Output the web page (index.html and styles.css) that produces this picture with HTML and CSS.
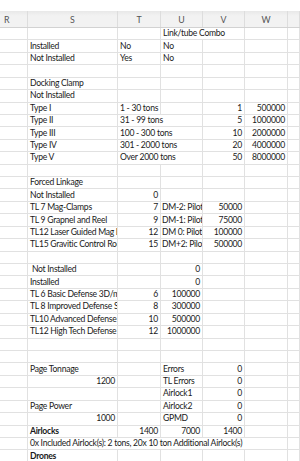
FILE: index.html
```html
<!DOCTYPE html>
<html>
<head>
<meta charset="utf-8">
<link rel="stylesheet" href="styles.css">
</head>
<body>
<div class="sheet">
  <div class="top"></div>
  <div class="hdr">
    <div class="hc first">R</div><div class="hc">S</div><div class="hc">T</div><div class="hc">U</div><div class="hc">V</div><div class="hc">W</div><div class="hc"></div>
  </div>

  <div class="row"><div class="c"></div><div class="c"></div><div class="c"></div><div class="c s2">Link/tube Combo</div><div class="c"></div><div class="c"></div></div>
  <div class="row"><div class="c"></div><div class="c">Installed</div><div class="c">No</div><div class="c">No</div><div class="c"></div><div class="c"></div><div class="c"></div></div>
  <div class="row"><div class="c"></div><div class="c">Not Installed</div><div class="c">Yes</div><div class="c">No</div><div class="c"></div><div class="c"></div><div class="c"></div></div>
  <div class="row"><div class="c"></div><div class="c"></div><div class="c"></div><div class="c"></div><div class="c"></div><div class="c"></div><div class="c"></div></div>
  <div class="row"><div class="c"></div><div class="c">Docking Clamp</div><div class="c"></div><div class="c"></div><div class="c"></div><div class="c"></div><div class="c"></div></div>
  <div class="row"><div class="c"></div><div class="c">Not Installed</div><div class="c"></div><div class="c"></div><div class="c"></div><div class="c"></div><div class="c"></div></div>
  <div class="row"><div class="c"></div><div class="c">Type I</div><div class="c">1 - 30 tons</div><div class="c"></div><div class="c n">1</div><div class="c n">500000</div><div class="c"></div></div>
  <div class="row"><div class="c"></div><div class="c">Type II</div><div class="c s2">31 - 99 tons</div><div class="c n">5</div><div class="c n">1000000</div><div class="c"></div></div>
  <div class="row"><div class="c"></div><div class="c">Type III</div><div class="c s2">100 - 300 tons</div><div class="c n">10</div><div class="c n">2000000</div><div class="c"></div></div>
  <div class="row"><div class="c"></div><div class="c">Type IV</div><div class="c s2">301 - 2000 tons</div><div class="c n">20</div><div class="c n">4000000</div><div class="c"></div></div>
  <div class="row"><div class="c"></div><div class="c">Type V</div><div class="c s2">Over 2000 tons</div><div class="c n">50</div><div class="c n">8000000</div><div class="c"></div></div>
  <div class="row"><div class="c"></div><div class="c"></div><div class="c"></div><div class="c"></div><div class="c"></div><div class="c"></div><div class="c"></div></div>
  <div class="row"><div class="c"></div><div class="c">Forced Linkage</div><div class="c"></div><div class="c"></div><div class="c"></div><div class="c"></div><div class="c"></div></div>
  <div class="row"><div class="c"></div><div class="c">Not Installed</div><div class="c n">0</div><div class="c"></div><div class="c"></div><div class="c"></div><div class="c"></div></div>
  <div class="row"><div class="c"></div><div class="c">TL 7 Mag-Clamps</div><div class="c n">7</div><div class="c u">DM-2: Pilot</div><div class="c n">50000</div><div class="c"></div><div class="c"></div></div>
  <div class="row"><div class="c"></div><div class="c">TL 9 Grapnel and Reel</div><div class="c n">9</div><div class="c u">DM-1: Pilot</div><div class="c n">75000</div><div class="c"></div><div class="c"></div></div>
  <div class="row"><div class="c"></div><div class="c">TL12 Laser Guided Mag Lock</div><div class="c n">12</div><div class="c u">DM 0: Pilot</div><div class="c n">100000</div><div class="c"></div><div class="c"></div></div>
  <div class="row"><div class="c"></div><div class="c">TL15 Gravitic Control Rod</div><div class="c n">15</div><div class="c u">DM+2: Pilot</div><div class="c n">500000</div><div class="c"></div><div class="c"></div></div>
  <div class="row"><div class="c"></div><div class="c"></div><div class="c"></div><div class="c"></div><div class="c"></div><div class="c"></div><div class="c"></div></div>
  <div class="row"><div class="c"></div><div class="c">&nbsp;Not Installed</div><div class="c"></div><div class="c n">0</div><div class="c"></div><div class="c"></div><div class="c"></div></div>
  <div class="row"><div class="c"></div><div class="c">Installed</div><div class="c"></div><div class="c n">0</div><div class="c"></div><div class="c"></div><div class="c"></div></div>
  <div class="row"><div class="c"></div><div class="c">TL 6 Basic Defense 3D/mm</div><div class="c n">6</div><div class="c n">100000</div><div class="c"></div><div class="c"></div><div class="c"></div></div>
  <div class="row"><div class="c"></div><div class="c">TL 8 Improved Defense Sys</div><div class="c n">8</div><div class="c n">300000</div><div class="c"></div><div class="c"></div><div class="c"></div></div>
  <div class="row"><div class="c"></div><div class="c">TL10 Advanced Defense</div><div class="c n">10</div><div class="c n">500000</div><div class="c"></div><div class="c"></div><div class="c"></div></div>
  <div class="row"><div class="c"></div><div class="c">TL12 High Tech Defense</div><div class="c n">12</div><div class="c n">1000000</div><div class="c"></div><div class="c"></div><div class="c"></div></div>
  <div class="row"><div class="c"></div><div class="c"></div><div class="c"></div><div class="c"></div><div class="c"></div><div class="c"></div><div class="c"></div></div>
  <div class="row"><div class="c"></div><div class="c"></div><div class="c"></div><div class="c"></div><div class="c"></div><div class="c"></div><div class="c"></div></div>
  <div class="row"><div class="c"></div><div class="c">Page Tonnage</div><div class="c"></div><div class="c">Errors</div><div class="c n">0</div><div class="c"></div><div class="c"></div></div>
  <div class="row"><div class="c"></div><div class="c n">1200</div><div class="c"></div><div class="c">TL Errors</div><div class="c n">0</div><div class="c"></div><div class="c"></div></div>
  <div class="row"><div class="c"></div><div class="c"></div><div class="c"></div><div class="c">Airlock1</div><div class="c n">0</div><div class="c"></div><div class="c"></div></div>
  <div class="row"><div class="c"></div><div class="c">Page Power</div><div class="c"></div><div class="c">Airlock2</div><div class="c n">0</div><div class="c"></div><div class="c"></div></div>
  <div class="row"><div class="c"></div><div class="c n">1000</div><div class="c"></div><div class="c">GPMD</div><div class="c n">0</div><div class="c"></div><div class="c"></div></div>
  <div class="row"><div class="c"></div><div class="c b">Airlocks</div><div class="c n">1400</div><div class="c n">7000</div><div class="c n">1400</div><div class="c"></div><div class="c"></div></div>
  <div class="row"><div class="c"></div><div class="c s5">0x Included Airlock(s): 2 tons, 20x 10 ton Additional Airlock(s)</div><div class="c"></div></div>
  <div class="row"><div class="c"></div><div class="c b">Drones</div><div class="c"></div><div class="c"></div><div class="c"></div><div class="c"></div><div class="c"></div></div>
</div>
</body>
</html>
```

FILE: styles.css
```css
html, body {
  margin: 0;
  padding: 0;
  background: #ffffff;
}
body {
  width: 300px;
  height: 461px;
  overflow: hidden;
  font-family: Lato, "Liberation Sans", sans-serif;
  font-size: 8.6px;
  letter-spacing: -0.28px;
  color: #1a1a1a;
}
.sheet {
  width: 300px;
}
.top {
  height: 11px;
  background: #ffffff;
}
.hdr {
  display: grid;
  grid-template-columns: 28px 90px 43px 42px 42px 43px 12px;
  height: 17px;
  box-sizing: border-box;
  background: linear-gradient(#e8e8e8, #f2f2f2 30%, #f2f2f2);
  border-bottom: 1px solid #d2d2d2;
}
.hc {
  display: flex;
  align-items: center;
  justify-content: center;
  color: #555555;
  font-size: 8.8px;
  letter-spacing: 0;
  border-right: 1px solid #dddddd;
  box-sizing: border-box;
}
.hc.first {
  justify-content: flex-start;
  padding-left: 4px;
}
.row {
  display: grid;
  grid-template-columns: 28px 90px 43px 42px 42px 43px 12px;
  height: 12.43px;
}
.c {
  box-sizing: border-box;
  border-right: 1px solid #e1e1e1;
  border-bottom: 1px solid #e1e1e1;
  padding: 0 2px;
  white-space: nowrap;
  overflow: hidden;
  display: flex;
  align-items: center;
  line-height: 11px;
}
.u {
  padding-left: 1px;
  padding-right: 0;
}
.n {
  justify-content: flex-end;
}
.b {
  font-weight: bold;
}
.s2 {
  grid-column: span 2;
}
.s5 {
  grid-column: span 5;
}
```
